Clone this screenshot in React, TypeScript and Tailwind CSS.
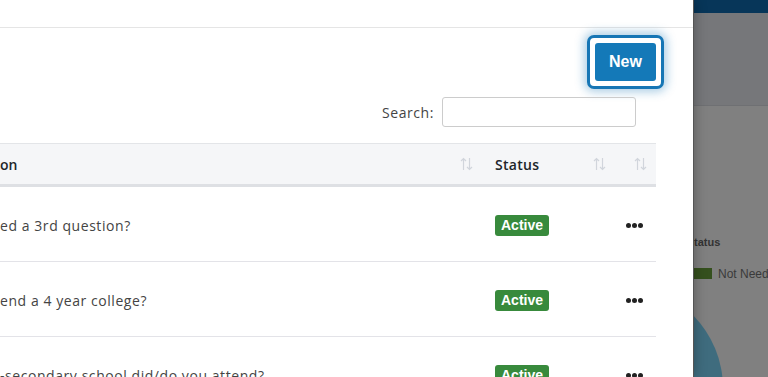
const ROWS: [string, string][] = [
  ["Does it ne", "ed a 3rd question?"],
  ["Do you plan to att", "end a 4 year college?"],
  ["Which post", "-secondary school did/do you attend?"],
];

function SortIcon() {
  return (
    <svg width="13" height="14" viewBox="0 0 13 14" className="text-gray-300" fill="none" stroke="currentColor" strokeWidth="1.2">
      <path d="M3.5 13V1.5M1 4l2.5-2.5L6 4" />
      <path d="M9.5 1v11.5M7 10l2.5 2.5L12 10" />
    </svg>
  );
}

// the table is scrolled sideways, so the start of the first column sits off screen
function Clipped({ head, tail }: { head: string; tail: string }) {
  return (
    <div className="flex-1 overflow-hidden whitespace-nowrap flex">
      <span className="w-[43px] shrink-0 overflow-hidden flex justify-end">{head}</span>
      <span>{tail}</span>
    </div>
  );
}

export default function App() {
  const font = { fontFamily: "'Open Sans', 'Noto Sans', sans-serif" };
  return (
    <div className="w-[768px] h-[377px] overflow-hidden flex bg-[#808080]" style={font}>
      {/* modal panel */}
      <div className="w-[694px] shrink-0 bg-white border-r border-[#555] flex flex-col overflow-hidden shadow-[0_0_12px_rgba(0,0,0,0.3)] z-10">
        <div className="h-[28px] border-b border-[#e5e5e5] shrink-0" />
        <div className="w-[656px] relative">
          <div className="flex justify-end pt-[7px] -mr-[8px]">
            <button className="rounded-[7px] border-[3px] border-[#1676b5] bg-white p-[5px] shadow-[0_0_10px_3px_rgba(22,118,181,0.35)]">
              <span className="flex w-[61px] h-[38px] items-center justify-center rounded-[3px] bg-[#1479b8] text-white text-[16px] font-bold" style={{ fontFamily: "'Liberation Sans', Arial, sans-serif" }}>
                New
              </span>
            </button>
          </div>
          <div className="flex justify-end items-center gap-[8px] pr-[20px] pt-[8px]">
            <span className="text-[14px] tracking-[0.04em] text-[#444]">Search:</span>
            <input className="w-[194px] h-[30px] rounded-[3px] border border-[#ccc] outline-none" />
          </div>
          <div className="mt-[16px] border-t border-[#e3e5e8] -ml-[43px]">
            <div className="h-[43px] bg-[#f5f6f8] border-b-[3px] border-[#dee0e4] flex items-center text-[14px] font-semibold text-[#212529]">
              <Clipped head="Questi" tail="on" />
              <div className="w-[35px]"><SortIcon /></div>
              <div className="w-[98px] tracking-[0.02em]">Status</div>
              <div className="w-[41px]"><SortIcon /></div>
              <div className="w-[22px]"><SortIcon /></div>
            </div>
            {ROWS.map(([head, tail], i) => (
              <div key={i} className="h-[75px] border-b border-[#e3e3e8] flex items-center pt-[2px] text-[14px] tracking-[0.04em] text-[#444]">
                <Clipped head={head} tail={tail} />
                <div className="w-[131px] shrink-0">
                  <span className="inline-flex h-[21px] w-[54px] items-center justify-center rounded-[3px] bg-[#388a3c] text-white text-[14px] font-bold tracking-normal" style={{ fontFamily: "'Liberation Sans', Arial, sans-serif" }}>
                    Active
                  </span>
                </div>
                <div className="w-[30px] shrink-0 flex gap-[1px]">
                  <span className="w-[5px] h-[5px] rounded-full bg-[#222]" />
                  <span className="w-[5px] h-[5px] rounded-full bg-[#222]" />
                  <span className="w-[5px] h-[5px] rounded-full bg-[#222]" />
                </div>
              </div>
            ))}
          </div>
        </div>
      </div>
      {/* background page behind overlay */}
      <div className="flex-1 flex flex-col overflow-hidden" style={{ fontFamily: "'Liberation Sans', Arial, sans-serif" }}>
        <div className="h-[13px] bg-[#073659] shrink-0" />
        <div className="h-[93px] bg-[#76777a] border-b border-[#6f7073] shrink-0" />
        <div className="flex-1 relative">
          <div className="absolute left-0 top-[128px] text-[11px] font-bold text-[#333]">tatus</div>
          <div className="absolute left-0 top-[162px] w-[18px] h-[11px] bg-[#35501e]" />
          <div className="absolute left-[24px] top-[159px] text-[12px] text-[#3a3a3a] whitespace-nowrap">Not Need</div>
          <div className="absolute -left-[177px] top-[179px] w-[206px] h-[206px] rounded-full bg-[#3f6c7e]" />
        </div>
      </div>
    </div>
  );
}
